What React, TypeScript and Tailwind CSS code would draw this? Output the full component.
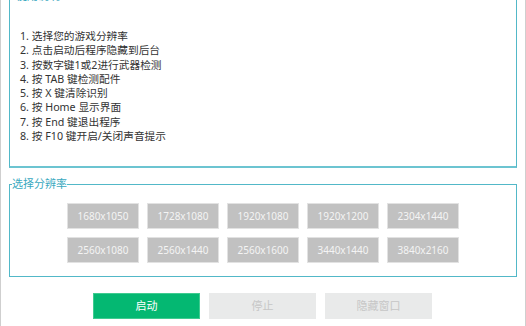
const font = { fontFamily: '"Noto Sans", "Noto Sans CJK SC", sans-serif' };

const steps = [
  "1. 选择您的游戏分辨率",
  "2. 点击启动后程序隐藏到后台",
  "3. 按数字键1或2进行武器检测",
  "4. 按 TAB 键检测配件",
  "5. 按 X 键清除识别",
  "6. 按 Home 显示界面",
  "7. 按 End 键退出程序",
  "8. 按 F10 键开启/关闭声音提示",
];

const resolutions = [
  "1680x1050",
  "1728x1080",
  "1920x1080",
  "1920x1200",
  "2304x1440",
  "2560x1080",
  "2560x1440",
  "2560x1600",
  "3440x1440",
  "3840x2160",
];

export default function App() {
  return (
    <div
      style={font}
      className="w-[526px] h-[326px] overflow-hidden bg-white border-x border-[#cfcfcf] flex flex-col"
    >
      <fieldset className="ml-[8px] mt-[-12px] w-[508px] h-[180px] shrink-0 border border-[#52b8c8] border-b-2 border-b-[#6cc4d1]">
        <legend className="ml-[6px] text-[11px] leading-[16px] text-[#3aa9c0]">使用说明</legend>
        <div className="pt-[25px] pl-[10px] text-[10.7px] leading-[14.3px] text-[#333333]">
          {steps.map((s) => (
            <p key={s}>{s}</p>
          ))}
        </div>
      </fieldset>

      <fieldset className="ml-[8px] mt-[8px] w-[508px] h-[101px] shrink-0 border border-[#52b8c8]">
        <legend className="ml-[2px] text-[11px] leading-[16px] text-[#3aa9c0]">选择分辨率</legend>
        <div className="pt-[11px] pl-[57px] grid grid-cols-[repeat(5,72px)] gap-[8px]">
          {resolutions.map((r) => (
            <button
              key={r}
              className="h-[26px] bg-[#c1c1c1] border border-[#e2e2e2] text-[10px] text-[#f4f4f4] flex items-center justify-center"
            >
              {r}
            </button>
          ))}
        </div>
      </fieldset>

      <div className="mt-[16px] pl-[92px] flex gap-[9px]">
        <button className="w-[107px] h-[26px] bg-[#04b872] border border-[#3fcb90] text-[11px] text-white flex items-center justify-center">
          启动
        </button>
        <button className="w-[107px] h-[26px] bg-[#e9eaea] text-[11px] text-[#c6c6c6] flex items-center justify-center">
          停止
        </button>
        <button className="w-[107px] h-[26px] bg-[#e9eaea] text-[11px] text-[#c6c6c6] flex items-center justify-center">
          隐藏窗口
        </button>
      </div>
    </div>
  );
}
